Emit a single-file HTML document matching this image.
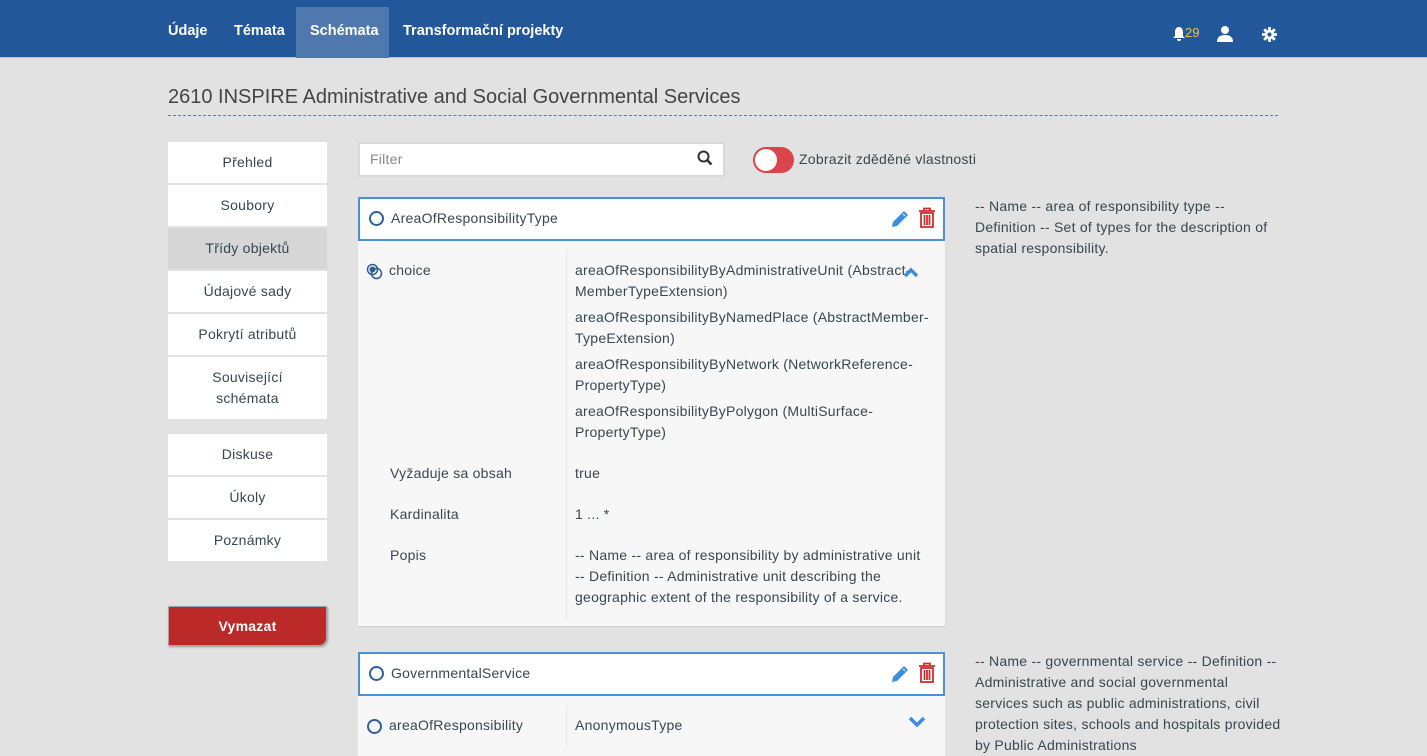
<!DOCTYPE html>
<html><head><meta charset="utf-8"><style>
*{box-sizing:border-box;margin:0;padding:0}
body{width:1427px;height:742px;overflow:hidden;background:#e2e2e2;font-family:"Liberation Sans",sans-serif;color:#37474f;font-size:14px;letter-spacing:0.25px;position:relative}
.a{position:absolute}
.nav{left:0;top:0;width:1427px;height:58px;background:#22579a;border-bottom:1px solid #b8c2cc}
.nav span{position:absolute;top:23px;color:#fff;font-weight:bold;font-size:14.5px;letter-spacing:0}
.menu{left:168px;width:159px;background:#fff;text-align:center;display:flex;align-items:center;justify-content:center;line-height:21px}
.lbl{left:390px}
.val{left:575px;line-height:21px}
.circ{width:15px;height:15px;border:2px solid #2f5f9a;border-radius:50%}
</style></head><body>
<div class="a nav">
<div class="a" style="left:296px;top:7px;width:93px;height:51px;background:#4f79ad"></div>
<span style="left:168px">Údaje</span>
<span style="left:234px">Témata</span>
<span style="left:310px">Schémata</span>
<span style="left:403px">Transformační projekty</span>
<svg class="a" style="left:1172px;top:26px" width="14" height="15" viewBox="0 0 14 15"><path d="M7 1C4 1 3 4 3 6v4L1 12h12l-2-2V6c0-2-1-5-4-5z M5 13a2 2 0 004 0z" fill="#fff"/></svg>
<span style="left:1185px;top:25px;color:#f0c040;font-weight:normal;font-size:13px">29</span>
<svg class="a" style="left:1217px;top:25px" width="16" height="17" viewBox="0 0 16 17"><circle cx="8" cy="5" r="4" fill="#fff"/><path d="M0 17c0-5 3-7 8-7s8 2 8 7z" fill="#fff"/></svg>
<svg class="a" style="left:1262px;top:27px" width="15" height="15" viewBox="0 0 16 16"><g fill="#fff"><circle cx="8" cy="8" r="5"/><rect x="6.5" y="0" width="3" height="16"/><rect x="0" y="6.5" width="16" height="3"/><rect x="6.5" y="0" width="3" height="16" transform="rotate(45 8 8)"/><rect x="6.5" y="0" width="3" height="16" transform="rotate(-45 8 8)"/></g><circle cx="8" cy="8" r="2.2" fill="#22579a"/></svg>
</div>
<div class="a" style="left:168px;top:86px;font-size:20px;color:#444;letter-spacing:0">2610 INSPIRE Administrative and Social Governmental Services</div>
<div class="a" style="left:168px;top:115px;width:1110px;border-top:1px dashed #5a7a9a"></div>

<div class="a menu" style="top:142px;height:41px">Přehled</div>
<div class="a menu" style="top:185px;height:41px">Soubory</div>
<div class="a menu" style="top:228px;height:41px;background:#d6d6d6">Třídy objektů</div>
<div class="a menu" style="top:271px;height:41px">Údajové sady</div>
<div class="a menu" style="top:314px;height:41px">Pokrytí atributů</div>
<div class="a menu" style="top:357px;height:62px">Související<br>schémata</div>
<div class="a menu" style="top:434px;height:41px">Diskuse</div>
<div class="a menu" style="top:477px;height:41px">Úkoly</div>
<div class="a menu" style="top:520px;height:41px">Poznámky</div>
<div class="a menu" style="top:606px;height:40px;background:#bb2a28;color:#fff;font-weight:bold;border:1px solid #9aa8b4;border-radius:0 0 8px 0;box-shadow:1px 1px 2px #999">Vymazat</div>

<div class="a" style="left:358px;top:142px;width:367px;height:35px;background:#fff;border:2px solid #d8d8d8"></div>
<div class="a" style="left:370px;top:151px;color:#888">Filter</div>
<svg class="a" style="left:697px;top:150px" width="16" height="16" viewBox="0 0 16 16"><circle cx="6.5" cy="6.5" r="5" stroke="#333" stroke-width="2" fill="none"/><path d="M10 10l4.5 4.5" stroke="#333" stroke-width="2.5"/></svg>
<div class="a" style="left:753px;top:147px;width:41px;height:26px;border-radius:13px;background:#d9454a"></div>
<div class="a" style="left:755px;top:149px;width:22px;height:22px;border-radius:50%;background:#fff"></div>
<div class="a" style="left:799px;top:151px">Zobrazit zděděné vlastnosti</div>

<div class="a" style="left:358px;top:241px;width:587px;height:385px;background:#f7f7f7;box-shadow:0 1px 1px #ccc"></div>
<div class="a" style="left:566px;top:250px;height:370px;border-left:1px solid #e6e6e6"></div>
<div class="a" style="left:358px;top:197px;width:587px;height:44px;background:#fff;border:2px solid #4a90d9"></div>
<div class="a circ" style="left:369px;top:211px"></div>
<div class="a" style="left:391px;top:210px">AreaOfResponsibilityType</div>
<svg class="a" style="left:890px;top:209px" width="20" height="20" viewBox="0 0 20 20"><path d="M14 2l4 4L7 17l-5 1 1-5z" fill="#3a8ee0"/><path d="M13 5l2 2" stroke="#fff" stroke-width="1"/></svg>
<svg class="a" style="left:918px;top:207px" width="18" height="22" viewBox="0 0 18 22"><g fill="none" stroke="#cc2f2f" stroke-width="1.8"><path d="M1 4h16M6 4V1.5h6V4"/><rect x="3" y="6" width="12" height="14"/><path d="M6.5 8v10M9 8v10M11.5 8v10"/></g></svg>

<svg class="a" style="left:366px;top:263px" width="17" height="17" viewBox="0 0 17 17"><circle cx="6.5" cy="6.5" r="5" fill="none" stroke="#2f5f9a" stroke-width="1.5"/><circle cx="6.5" cy="6.5" r="3" fill="#2f5f9a"/><circle cx="10.5" cy="10.5" r="5" fill="none" stroke="#2f5f9a" stroke-width="1.5"/></svg>
<div class="a" style="left:389px;top:262px">choice</div>
<div class="a val" style="top:260px">areaOfResponsibilityByAdministrativeUnit (Abstract-<br>MemberTypeExtension)</div>
<div class="a val" style="top:307px">areaOfResponsibilityByNamedPlace (AbstractMember-<br>TypeExtension)</div>
<div class="a val" style="top:354px">areaOfResponsibilityByNetwork (NetworkReference-<br>PropertyType)</div>
<div class="a val" style="top:401px">areaOfResponsibilityByPolygon (MultiSurface-<br>PropertyType)</div>
<svg class="a" style="left:903px;top:266px" width="16" height="12" viewBox="0 0 16 12"><path d="M2 10l6-6 6 6" fill="none" stroke="#3a8ee0" stroke-width="3.5"/></svg>
<div class="a lbl" style="top:465px">Vyžaduje sa obsah</div>
<div class="a val" style="top:463px">true</div>
<div class="a lbl" style="top:506px">Kardinalita</div>
<div class="a val" style="top:504px">1 ... *</div>
<div class="a lbl" style="top:547px">Popis</div>
<div class="a val" style="top:545px">-- Name -- area of responsibility by administrative unit<br>-- Definition -- Administrative unit describing the<br>geographic extent of the responsibility of a service.</div>
<div class="a" style="left:975px;top:196px;line-height:21px;width:320px">-- Name -- area of responsibility type --<br>Definition -- Set of types for the description of<br>spatial responsibility.</div>

<div class="a" style="left:358px;top:696px;width:587px;height:60px;background:#f7f7f7"></div>
<div class="a" style="left:566px;top:706px;height:40px;border-left:1px solid #e6e6e6"></div>
<div class="a" style="left:358px;top:652px;width:587px;height:44px;background:#fff;border:2px solid #4a90d9"></div>
<div class="a circ" style="left:369px;top:666px"></div>
<div class="a" style="left:391px;top:665px">GovernmentalService</div>
<svg class="a" style="left:890px;top:664px" width="20" height="20" viewBox="0 0 20 20"><path d="M14 2l4 4L7 17l-5 1 1-5z" fill="#3a8ee0"/><path d="M13 5l2 2" stroke="#fff" stroke-width="1"/></svg>
<svg class="a" style="left:918px;top:662px" width="18" height="22" viewBox="0 0 18 22"><g fill="none" stroke="#cc2f2f" stroke-width="1.8"><path d="M1 4h16M6 4V1.5h6V4"/><rect x="3" y="6" width="12" height="14"/><path d="M6.5 8v10M9 8v10M11.5 8v10"/></g></svg>
<div class="a circ" style="left:367px;top:719px"></div>
<div class="a" style="left:389px;top:717px">areaOfResponsibility</div>
<div class="a" style="left:575px;top:717px">AnonymousType</div>
<svg class="a" style="left:908px;top:716px" width="18" height="12" viewBox="0 0 18 12"><path d="M2 2l7 7 7-7" fill="none" stroke="#3a8ee0" stroke-width="3.5"/></svg>
<div class="a" style="left:975px;top:651px;line-height:21px;width:320px">-- Name -- governmental service -- Definition --<br>Administrative and social governmental<br>services such as public administrations, civil<br>protection sites, schools and hospitals provided<br>by Public Administrations</div>
</body></html>
